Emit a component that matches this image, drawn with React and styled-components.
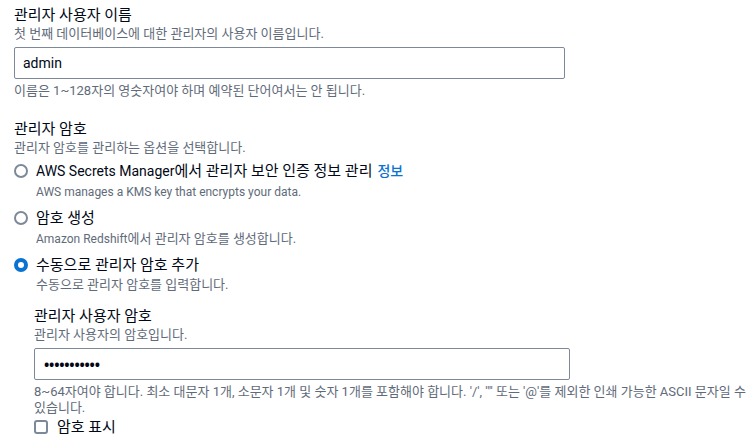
import React from "react";
import styled, { createGlobalStyle } from "styled-components";

const Global = createGlobalStyle`
  html, body { margin: 0; padding: 0; background: #ffffff; }
  body {
    font-family: Roboto, "Noto Sans CJK KR", sans-serif;
    color: #000716;
    -webkit-font-smoothing: antialiased;
  }
  * { box-sizing: border-box; }
`;

const Page = styled.div`
  width: 750px;
  height: 448px;
  overflow: hidden;
  padding: 4px 4px 0 14px;
  display: flex;
  flex-direction: column;
  gap: 20px;
`;

const Field = styled.div`
  display: flex;
  flex-direction: column;
  padding-left: ${(p) => p.$indent || 0}px;
  margin-top: ${(p) => p.$shift || 0}px;
`;

const Label = styled.div`
  font-size: 15px;
  line-height: 22px;
  color: #000716;
`;

const Desc = styled.div`
  font-size: 13px;
  line-height: 16px;
  color: #5f6b7a;
  margin-top: ${(p) => p.$gap || 0}px;
`;

const En = styled.span`
  font-size: ${(p) => p.$size || 12}px;
`;

const Hint = styled.div`
  font-size: 13px;
  line-height: 16px;
  color: #5f6b7a;
  margin-top: 4px;
  max-width: ${(p) => p.$max || 9999}px;
`;

const Input = styled.div`
  margin-top: 5px;
  width: ${(p) => p.$width}px;
  height: 32px;
  border: 1px solid #7d8998;
  border-radius: 2px;
  padding: 0 8px;
  display: flex;
  align-items: center;
  font-size: 15px;
  color: #000716;
`;

const Dots = styled.span`
  font-family: "Open Sans", sans-serif;
  font-size: 14px;
  font-weight: 700;
  letter-spacing: -0.2px;
  padding-left: 1px;
`;

const Options = styled.div`
  display: flex;
  flex-direction: column;
  gap: 7px;
  margin-top: 4px;
`;

const Option = styled.div`
  display: flex;
  gap: 8px;
`;

const RadioWrap = styled.div`
  width: 14px;
  height: 22px;
  display: flex;
  align-items: center;
  flex: none;
`;

const Radio = styled.span`
  width: 14px;
  height: 14px;
  border-radius: 50%;
  border: ${(p) => (p.$checked ? "4.5px solid #0972d3" : "2px solid #7d8998")};
  background: #fff;
`;

const OptionText = styled.div`
  display: flex;
  flex-direction: column;
`;

const Link = styled.span`
  color: #0972d3;
  font-size: 14px;
  font-weight: 500;
  margin-left: 5px;
`;

const CheckRow = styled.div`
  display: flex;
  align-items: center;
  gap: 9px;
  height: 22px;
`;

const Box = styled.span`
  width: 14px;
  height: 14px;
  border: 2px solid #7d8998;
  border-radius: 3px;
  flex: none;
`;

export default function App() {
  return (
    <>
      <Global />
      <Page>
        <Field>
          <Label>관리자 사용자 이름</Label>
          <Desc>첫 번째 데이터베이스에 대한 관리자의 사용자 이름입니다.</Desc>
          <Input $width={551}><En $size={14}>admin</En></Input>
          <Hint>이름은 1~128자의 영숫자여야 하며 예약된 단어여서는 안 됩니다.</Hint>
        </Field>
        <Field $shift={-1}>
          <Label>관리자 암호</Label>
          <Desc>관리자 암호를 관리하는 옵션을 선택합니다.</Desc>
          <Options>
            <Option>
              <RadioWrap><Radio /></RadioWrap>
              <OptionText>
                <Label>
                  <En $size={14}>AWS Secrets Manager</En>에서 관리자 보안 인증 정보 관리<Link>정보</Link>
                </Label>
                <Desc $gap={2}><En>AWS manages a KMS key that encrypts your data.</En></Desc>
              </OptionText>
            </Option>
            <Option>
              <RadioWrap><Radio /></RadioWrap>
              <OptionText>
                <Label>암호 생성</Label>
                <Desc $gap={2}><En>Amazon Redshift</En>에서 관리자 암호를 생성합니다.</Desc>
              </OptionText>
            </Option>
            <Option>
              <RadioWrap><Radio $checked /></RadioWrap>
              <OptionText>
                <Label>수동으로 관리자 암호 추가</Label>
                <Desc $gap={1}>수동으로 관리자 암호를 입력합니다.</Desc>
              </OptionText>
            </Option>
          </Options>
        </Field>
        <Field $indent={20} $shift={-8}>
          <Label>관리자 사용자 암호</Label>
          <Desc>관리자 사용자의 암호입니다.</Desc>
          <Input $width={536}><Dots>•••••••••••</Dots></Input>
          <Hint $max={712}>
            8~64자여야 합니다. 최소 대문자 1개, 소문자 1개 및 숫자 1개를 포함해야 합니다. '/', '"' 또는 '@'를 제외한 인쇄 가능한 ASCII 문자일 수 있습니다.
          </Hint>
          <CheckRow>
            <Box />
            <Label>암호 표시</Label>
          </CheckRow>
        </Field>
      </Page>
    </>
  );
}
